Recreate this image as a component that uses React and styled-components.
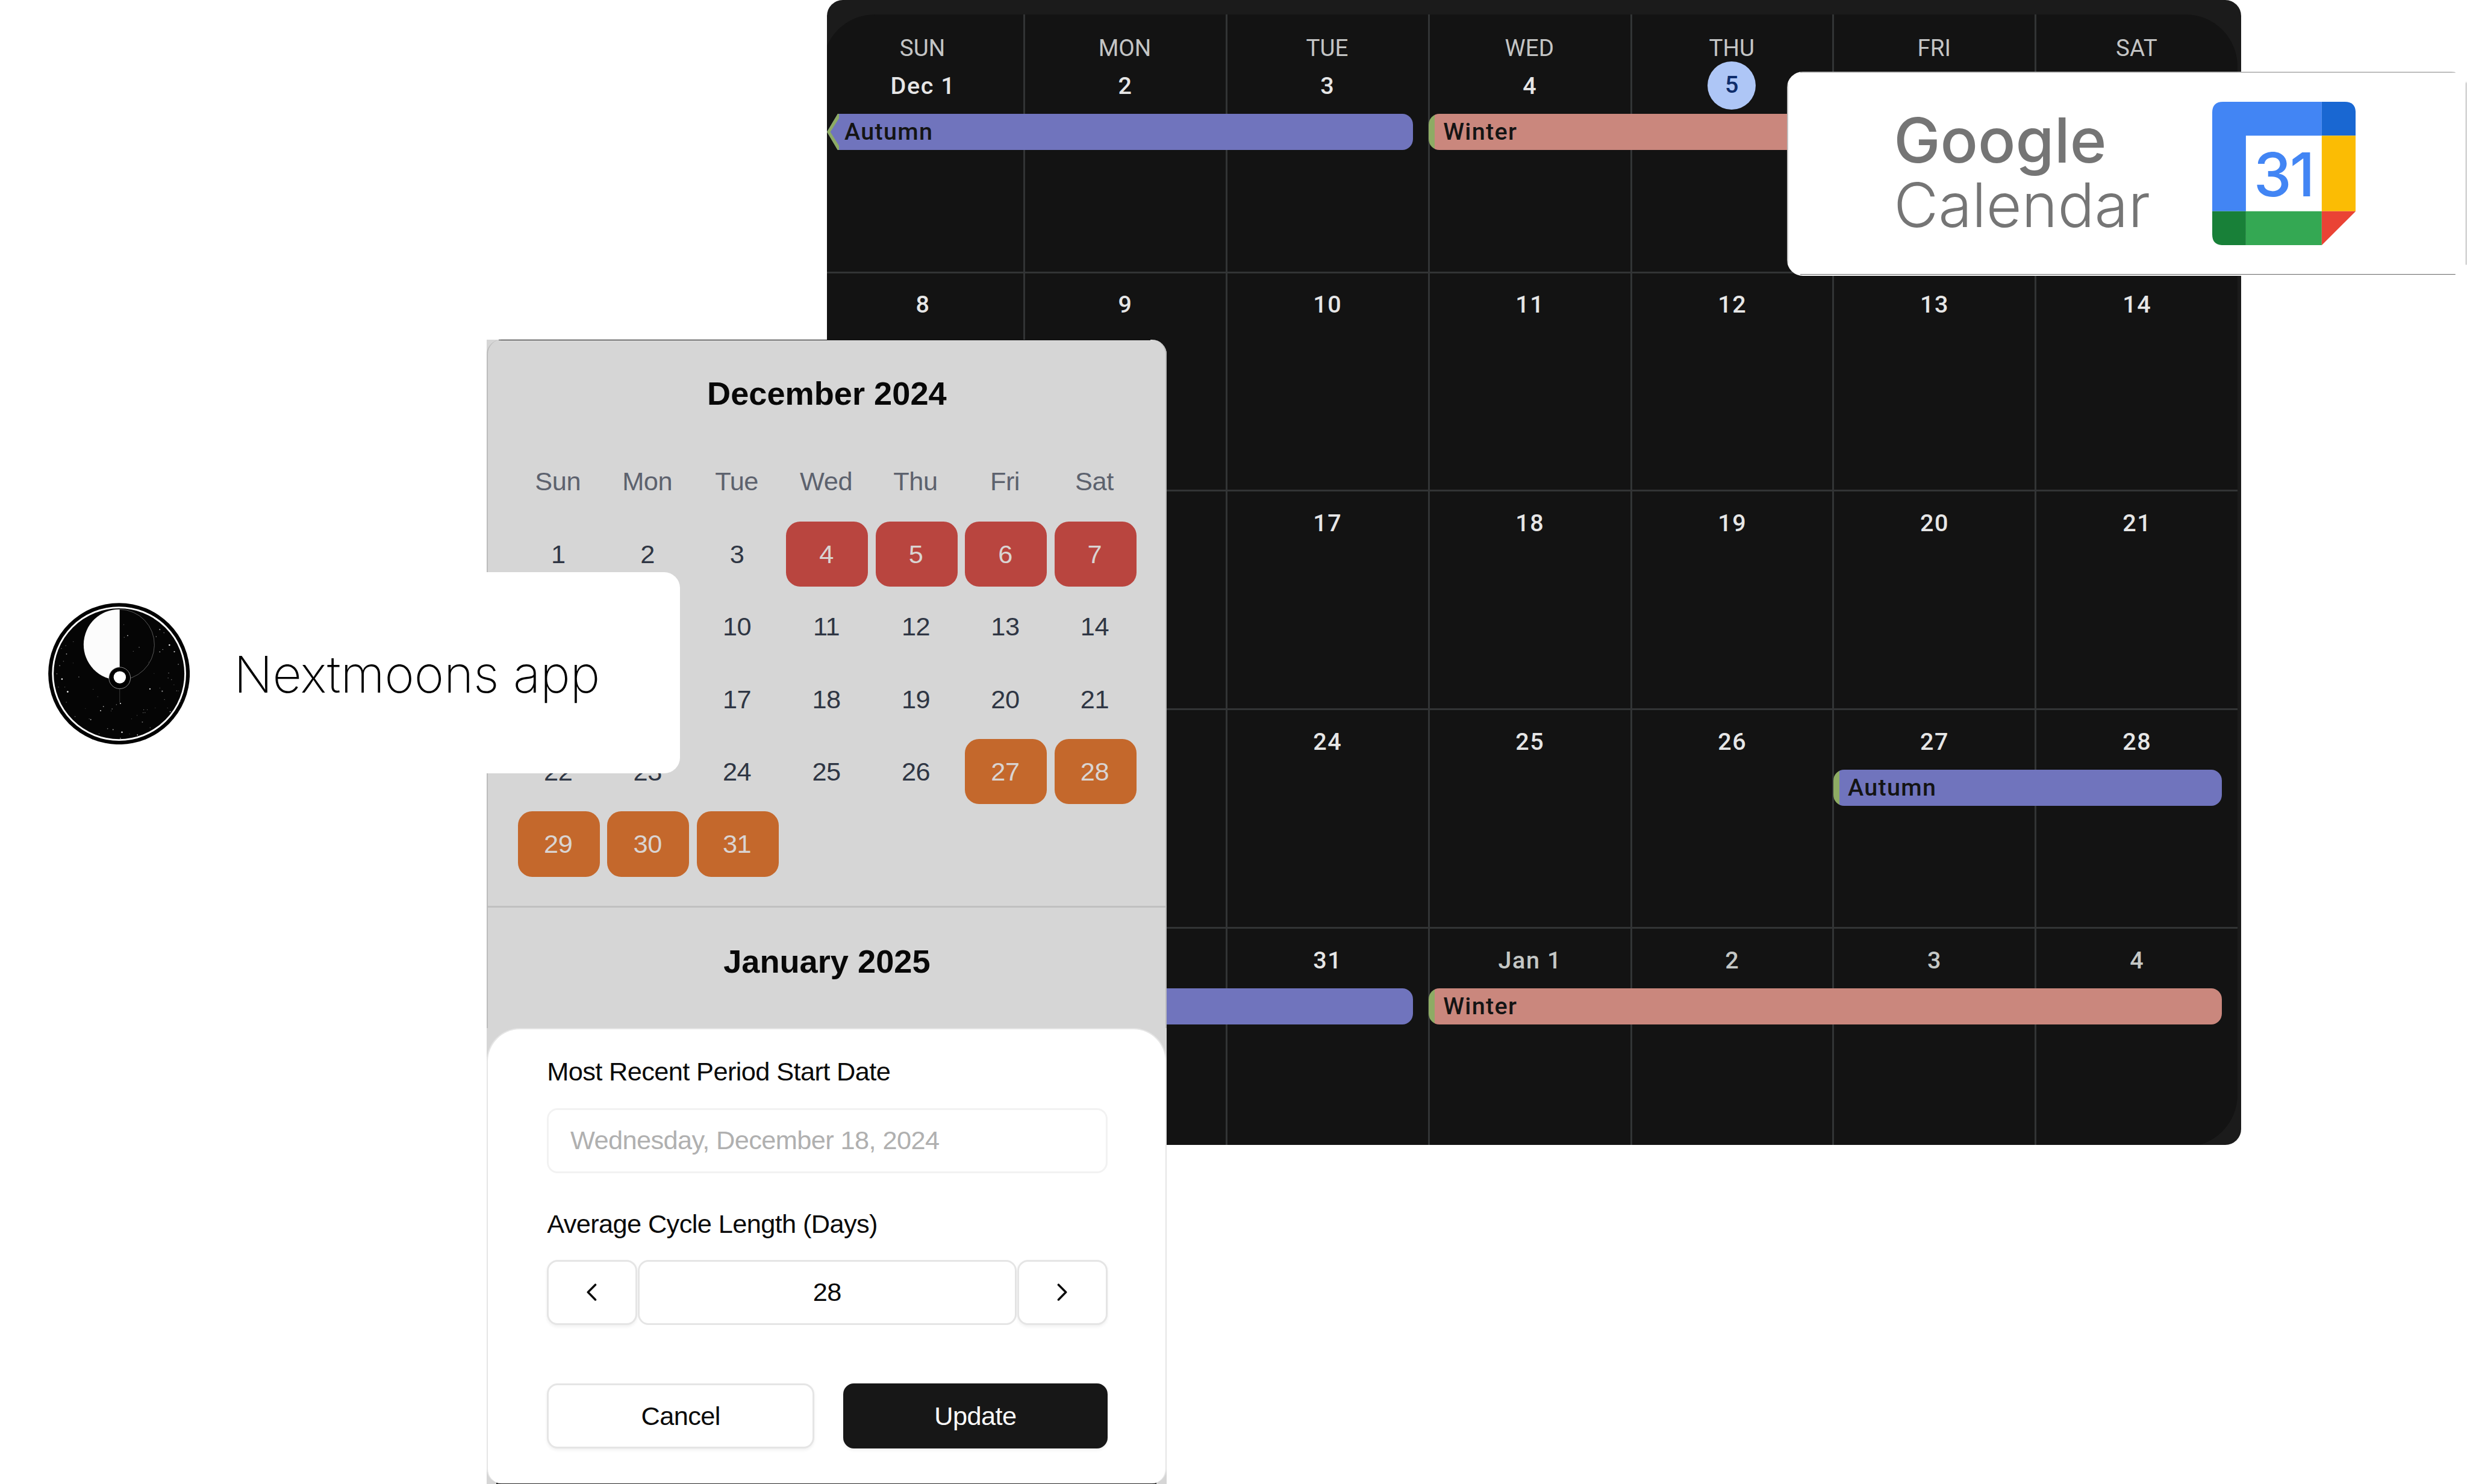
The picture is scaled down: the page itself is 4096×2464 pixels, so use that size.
import React from "react";
import styled, { createGlobalStyle, css } from "styled-components";

const GlobalStyle = createGlobalStyle`
  html { font-size: 9.40961px; }
  body { margin: 0; background: #fff; overflow: hidden; }
  *, *::before, *::after { box-sizing: border-box; }
`;

const sans = css`font-family: "Liberation Sans", Arial, sans-serif;`;
const ui = css`font-family: Roboto, sans-serif;`;
const brand = css`font-family: Inter, sans-serif;`;

const Stage = styled.main`
  position: relative;
  width: 100vw;
  height: 100vh;
  overflow: hidden;
  background: #fff;
`;

/* ---------- Month view ---------- */

const MonthWindow = styled.section`
  position: absolute;
  left: 145.9rem;
  top: 0;
  width: 249.5rem;
  height: 202rem;
  padding-top: 2.5rem;
  border-radius: 2.8rem;
  background: #1b1b1b;
  overflow: hidden;
  ${ui}
`;

const MonthGrid = styled.div`
  display: grid;
  grid-template-rows: 45.7rem repeat(3, 38.57rem) 38.7rem;
  width: 249.65rem;
  height: 199.9rem;
  margin-left: -0.75rem;
  border-radius: 9.2rem;
  background: #131313;
  overflow: hidden;
`;

const Week = styled.div`
  display: grid;
  grid-template-columns: repeat(6, 35.7rem) 35.45rem;
  grid-template-rows: 100%;
`;

const DayCell = styled.div`
  grid-row: 1;
  grid-column: ${(p) => p.$col};
  display: flex;
  flex-direction: column;
  align-items: center;
  padding: ${(p) => (p.$first ? "2.55rem" : "2.2rem")} 0.15rem 0 0;
  border-right: ${(p) => (p.$col < 7 ? "0.32rem solid #323435" : "none")};
  border-bottom: ${(p) => (p.$last ? "none" : "0.32rem solid #323435")};
`;

const WeekdayName = styled.div`
  height: 6.7rem;
  line-height: 6.7rem;
  font-size: 4.1rem;
  font-weight: 430;
  color: #c4c5c5;
`;

const DateLabel = styled.div`
  height: 6.7rem;
  line-height: 6.7rem;
  font-size: 4.2rem;
  font-weight: 460;
  letter-spacing: 0.17rem;
  margin-right: -0.2rem;
  color: ${(p) => (p.$muted ? "#c4c7c5" : "#e6e6e6")};
`;

const TodayLabel = styled.div`
  width: 8.5rem;
  height: 8.5rem;
  margin: -0.95rem 0;
  line-height: 8.3rem;
  text-align: center;
  border-radius: 50%;
  background: #aec6f6;
  color: #0f2d6b;
  font-size: 4.2rem;
  font-weight: 500;
`;

const tones = { autumn: "#7074bd", winter: "#ca877d" };

const Event = styled.div`
  grid-row: 1;
  grid-column: ${(p) => p.$from} / ${(p) => p.$to + 1};
  display: flex;
  height: 6.4rem;
  margin: ${(p) => (p.$first ? "17.6rem" : "10.45rem")} ${(p) => (p.$to === 7 ? "2.8rem" : "2.95rem")} 0
    ${(p) => (p.$continued ? "0.75rem" : "-0.15rem")};
`;

const EventBody = styled.div`
  flex: 1;
  display: flex;
  align-items: center;
  padding-left: ${(p) => (p.$continued ? "0.95rem" : "2.55rem")};
  border-radius: ${(p) => (p.$continued ? "0 1.9rem 1.9rem 0" : "1.9rem")};
  background: ${(p) =>
    p.$continued
      ? tones[p.$tone]
      : `linear-gradient(to right, #8dab64 1.1rem, ${tones[p.$tone]} 1.1rem)`};
  color: #141414;
  font-size: 4.2rem;
  font-weight: 460;
  letter-spacing: 0.14rem;
  line-height: 1;
`;

const ArrowHead = styled.svg`
  flex: none;
  display: block;
  width: 2.2rem;
  height: 6.4rem;
  margin-right: -0.06rem;
`;

const weekdays = ["SUN", "MON", "TUE", "WED", "THU", "FRI", "SAT"];

const weeks = [
  {
    days: ["Dec 1", "2", "3", "4", "5", "", ""],
    events: [
      { tone: "autumn", label: "Autumn", from: 1, to: 3, continued: true },
      { tone: "winter", label: "Winter", from: 4, to: 7 },
    ],
  },
  { days: ["8", "9", "10", "11", "12", "13", "14"], events: [] },
  { days: ["", "", "17", "18", "19", "20", "21"], events: [] },
  {
    days: ["", "", "24", "25", "26", "27", "28"],
    events: [{ tone: "autumn", label: "Autumn", from: 6, to: 7 }],
  },
  {
    days: ["", "", "31", "Jan 1", "2", "3", "4"],
    mutedFrom: 3,
    events: [
      { tone: "autumn", label: "", from: 1, to: 3, continued: true },
      { tone: "winter", label: "Winter", from: 4, to: 7 },
    ],
  },
];

function EventBar({ event, first }) {
  const { tone, label, from, to, continued } = event;
  return (
    <Event $from={from} $to={to} $first={first} $continued={continued}>
      {continued && (
        <ArrowHead viewBox="0 0 22 64" preserveAspectRatio="none">
          <path d="M19 0H22V64H19L0 32Z" fill={tones[tone]} />
          <path d="M19 0H22L23 5L6 32L23 59L22 64H19L0 32Z" fill="#8dab64" />
        </ArrowHead>
      )}
      <EventBody $tone={tone} $continued={continued}>{label}</EventBody>
    </Event>
  );
}

function MonthView() {
  return (
    <MonthWindow>
      <MonthGrid>
        {weeks.map((week, w) => (
          <Week key={w}>
            {week.days.map((day, d) => (
              <DayCell key={d} $col={d + 1} $first={w === 0} $last={w === 4}>
                {w === 0 && <WeekdayName>{weekdays[d]}</WeekdayName>}
                {w === 0 && d === 4 ? (
                  <TodayLabel>{day}</TodayLabel>
                ) : (
                  <DateLabel $muted={week.mutedFrom !== undefined && d >= week.mutedFrom}>{day}</DateLabel>
                )}
              </DayCell>
            ))}
            {week.events.map((event, i) => (
              <EventBar key={i} event={event} first={w === 0} />
            ))}
          </Week>
        ))}
      </MonthGrid>
    </MonthWindow>
  );
}

/* ---------- Phone ---------- */

const Phone = styled.section`
  position: absolute;
  left: 85.9rem;
  top: 59.9rem;
  width: 120rem;
  height: 202rem;
  display: flex;
  flex-direction: column;
  border-radius: 0 2.6rem 0 0;
  background:
    linear-gradient(#111, #111) 2.1rem 0 / 115rem 0.13rem no-repeat,
    linear-gradient(#111, #111) 1.7rem 100% / 116.5rem 0.2rem no-repeat,
    #d6d6d6;
  ${sans}
`;

const Months = styled.div`
  height: 121.5rem;
  border: 0 solid #bcbcbc;
  border-width: 0 0.22rem;
  border-radius: 2.6rem 2.6rem 0 0;
`;

const MonthTitle = styled.h2`
  margin: 0;
  height: 19.1rem;
  line-height: 19.1rem;
  text-align: center;
  font-size: 5.76rem;
  font-weight: 700;
  color: #080808;
`;

const DayGrid = styled.div`
  display: grid;
  grid-template-columns: repeat(7, 14.44rem);
  grid-auto-rows: 11.52rem;
  gap: 1.28rem 1.34rem;
  padding: 0 0 5.1rem 5.28rem;
  border-bottom: 0.32rem solid #c0c0c0;
`;

const WeekdayRow = styled.div`
  display: grid;
  grid-template-columns: repeat(7, 14.44rem);
  column-gap: 1.34rem;
  height: 13rem;
  padding-left: 5.1rem;
  line-height: 12.1rem;
  text-align: center;
  font-size: 4.61rem;
  letter-spacing: -0.05rem;
  color: #5d626e;
`;

const marks = { red: "#b9453f", orange: "#c4682c" };

const Day = styled.div`
  padding-right: 0.25rem;
  line-height: 11.6rem;
  text-align: center;
  font-size: 4.61rem;
  letter-spacing: -0.05rem;
  border-radius: 2.5rem;
  color: ${(p) => (p.$mark ? "#d9d4d2" : "#2f3644")};
  background: ${(p) => (p.$mark ? marks[p.$mark] : "transparent")};
`;

const Sheet = styled.div`
  height: 80.4rem;
  padding: 4.15rem 10.3rem 0 10.4rem;
  border: 0.22rem solid #e5e5e5;
  border-bottom: 0;
  border-radius: 5.9rem 5.9rem 2.6rem 2.6rem;
  background: #fff;
  font-size: 4.61rem;
  letter-spacing: -0.066rem;
  color: #0a0a0a;
`;

const Label = styled.div`
  height: 6.6rem;
  line-height: 6.6rem;
  white-space: nowrap;
`;

const box = css`
  display: flex;
  align-items: center;
  justify-content: center;
  height: 11.5rem;
  border: 0.32rem solid #e5e5e5;
  border-radius: 1.9rem;
  background: #fff;
`;

const DateField = styled.div`
  ${box}
  justify-content: flex-start;
  margin: 3.15rem 0 5.7rem;
  padding-left: 3.8rem;
  border-color: #f2f2f2;
  color: #b0b0b0;
`;

const Stepper = styled.div`
  display: grid;
  grid-template-columns: 15.9rem 1fr 15.9rem;
  column-gap: 0.1rem;
  margin: 3rem 0 10.3rem;
`;

const raised = css`box-shadow: 0 0.3rem 0.6rem rgba(0, 0, 0, 0.06);`;

const StepButton = styled.div`${box} ${raised}`;
const StepValue = styled.div`${box}`;

const Chevron = styled.svg`
  display: block;
  width: 1.8rem;
  height: 3.1rem;
  fill: none;
  stroke: #0a0a0a;
  stroke-width: 3.8;
  stroke-linecap: round;
  stroke-linejoin: round;
`;

const Actions = styled.div`
  display: grid;
  grid-template-columns: 47.2rem 1fr;
  column-gap: 5.1rem;
`;

const Button = styled.div`
  ${box}
  ${raised}
  ${(p) => p.$primary && css`background: #171717; border-color: #171717; color: #fafafa;`}
`;

const december = [
  "1", "2", "3", "4", "5", "6", "7",
  "", "", "10", "11", "12", "13", "14",
  "", "", "17", "18", "19", "20", "21",
  "22", "23", "24", "25", "26", "27", "28",
  "29", "30", "31",
];

const markOf = (day) => {
  const n = Number(day);
  if (n >= 4 && n <= 7) return "red";
  if (n >= 27) return "orange";
  return undefined;
};

function PhoneView() {
  return (
    <Phone>
      <Months>
        <MonthTitle>December 2024</MonthTitle>
        <WeekdayRow>
          {["Sun", "Mon", "Tue", "Wed", "Thu", "Fri", "Sat"].map((d) => (
            <span key={d}>{d}</span>
          ))}
        </WeekdayRow>
        <DayGrid>
          {december.map((d, i) => (
            <Day key={i} $mark={markOf(d)}>{d}</Day>
          ))}
        </DayGrid>
        <MonthTitle>January 2025</MonthTitle>
      </Months>
      <Sheet>
        <Label>Most Recent Period Start Date</Label>
        <DateField>Wednesday, December 18, 2024</DateField>
        <Label>Average Cycle Length (Days)</Label>
        <Stepper>
          <StepButton>
            <Chevron viewBox="0 0 18 31"><path d="M15.4 2.4L2.4 15.5L15.4 28.6" /></Chevron>
          </StepButton>
          <StepValue>28</StepValue>
          <StepButton>
            <Chevron viewBox="0 0 18 31"><path d="M2.6 2.4L15.6 15.5L2.6 28.6" /></Chevron>
          </StepButton>
        </Stepper>
        <Actions>
          <Button>Cancel</Button>
          <Button $primary>Update</Button>
        </Actions>
      </Sheet>
    </Phone>
  );
}

/* ---------- Brand cards ---------- */

const GoogleCard = styled.section`
  position: absolute;
  left: 315.3rem;
  top: 12.6rem;
  width: 120rem;
  height: 36.1rem;
  display: flex;
  align-items: flex-start;
  border-radius: 2.8rem;
  background:
    linear-gradient(#b8b8b8, #b8b8b8) 2.4rem 0 / 115.6rem 0.2rem no-repeat,
    linear-gradient(#666, #666) 2.4rem 35.78rem / 115.6rem 0.11rem no-repeat,
    linear-gradient(#bdbdbd, #bdbdbd) 0 2.2rem / 0.2rem 31.8rem no-repeat,
    linear-gradient(#9a9a9a, #9a9a9a) 119.75rem 1.8rem / 0.11rem 32.4rem no-repeat,
    #fff;
  ${brand}
`;

const GoogleName = styled.div`
  flex: none;
  width: 56.2rem;
  margin-left: 18.85rem;
  padding-top: 6.4rem;
  color: #757575;
`;

const NameLine = styled.div`
  height: 11.5rem;
  line-height: 11.5rem;
  white-space: nowrap;
  font-size: ${(p) => (p.$light ? "10.8rem" : "11rem")};
  font-weight: ${(p) => (p.$light ? 300 : 550)};
`;

const GoogleIcon = styled.svg`
  flex: none;
  display: block;
  width: 25.3rem;
  height: 25.3rem;
  margin-top: 5.4rem;
`;

const IconText = styled.text`
  ${brand}
  font-size: 320px;
  font-weight: 540;
  letter-spacing: -10px;
  fill: #4285f4;
`;

function GoogleCalendarCard() {
  return (
    <GoogleCard>
      <GoogleName>
        <NameLine>Google</NameLine>
        <NameLine $light>Calendar</NameLine>
      </GoogleName>
      <GoogleIcon viewBox="0 0 758 758">
        <path d="M57 0H579V179H178V579H0V57Q0 0 57 0Z" fill="#4285f4" />
        <path d="M579 0H701Q758 0 758 57V179H579Z" fill="#1967d2" />
        <path d="M579 179H758V579H579Z" fill="#fbbc04" />
        <path d="M178 579H579V758H178Z" fill="#34a853" />
        <path d="M0 579H178V758H57Q0 758 0 701Z" fill="#188038" />
        <path d="M579 579H758L579 758Z" fill="#ea4335" />
        <IconText x="219" y="501">31</IconText>
      </GoogleIcon>
    </GoogleCard>
  );
}

const AppCard = styled.section`
  position: absolute;
  left: 0;
  top: 101rem;
  width: 120rem;
  height: 35.5rem;
  display: flex;
  align-items: center;
  padding-left: 8.5rem;
  border-radius: 2.8rem;
  background: #fff;
`;

const AppLogo = styled.svg`
  display: block;
  flex: none;
  width: 25rem;
  height: 25rem;
  margin-top: 0.3rem;
`;

const AppName = styled.div`
  ${brand}
  margin: 0.4rem 0 0 7.75rem;
  white-space: nowrap;
  font-size: 8.95rem;
  font-weight: 220;
  letter-spacing: -0.02rem;
  line-height: 1;
  color: #000;
`;

/* x, y, radius, brightness */
const stars = [
  [671, 250, 4, 1], [620, 168, 3, 0.7], [642, 185, 2.4, 0.5], [601, 205, 2.4, 0.6], [697, 285, 3.6, 0.75],
  [636, 274, 2.4, 0.6], [620, 286, 3, 0.6], [718, 352, 2.6, 0.6], [667, 398, 2.6, 0.5], [682, 433, 2.2, 0.5],
  [664, 424, 2.4, 0.4], [568, 482, 3.6, 0.9], [633, 494, 3.4, 0.6], [620, 477, 2, 0.4], [103, 430, 4, 1],
  [133, 497, 4.4, 0.95], [192, 419, 2.6, 0.5], [91, 359, 2.6, 0.7], [111, 336, 2.6, 0.4], [127, 297, 2.8, 0.7],
  [100, 268, 2, 0.5], [123, 253, 2.6, 0.35], [76, 402, 2.2, 0.6], [84, 472, 2, 0.5], [118, 472, 2, 0.4],
  [126, 552, 2.4, 0.4], [163, 232, 2, 0.4], [450, 200, 3, 0.75], [432, 209, 2, 0.5], [511, 262, 2.4, 0.55],
  [480, 283, 2, 0.4], [430, 142, 2, 0.4], [412, 559, 3.2, 0.9], [391, 565, 2.4, 0.5], [368, 588, 2.6, 0.5],
  [322, 575, 2.8, 0.7], [307, 597, 3.2, 0.8], [292, 523, 2, 0.4], [268, 484, 2, 0.4], [363, 598, 2, 0.4],
  [255, 644, 3, 0.7], [247, 640, 2, 0.5], [172, 628, 2.2, 0.5], [344, 692, 2.6, 0.5], [373, 697, 2.8, 0.7],
  [420, 711, 4, 0.9], [299, 719, 2.4, 0.4], [502, 725, 3, 0.7], [412, 743, 2.6, 0.7], [528, 657, 3, 0.5],
  [569, 687, 2.6, 0.4], [535, 592, 2, 0.5], [542, 607, 2, 0.5], [532, 608, 2, 0.5], [554, 592, 2, 0.4],
  [500, 622, 2, 0.4], [675, 602, 3, 0.7], [645, 538, 2.4, 0.4], [661, 583, 2, 0.4], [596, 582, 2, 0.3],
  [709, 492, 2.2, 0.5], [718, 492, 2, 0.4], [471, 640, 2, 0.3], [730, 548, 2, 0.4], [695, 460, 2, 0.3],
  [227, 585, 1.8, 0.3], [162, 345, 1.8, 0.3], [560, 340, 1.8, 0.25], [590, 400, 1.8, 0.25], [460, 720, 1.8, 0.3],
];

function AppBrandCard() {
  return (
    <AppCard>
      <AppLogo viewBox="30 27 749 749">
        <circle cx="404.5" cy="401.5" r="374" fill="#000" />
        <circle cx="404.5" cy="401.5" r="350" fill="#050505" stroke="#fff" strokeWidth="9" />
        {stars.map(([x, y, r, o]) => (
          <circle key={`${x}-${y}`} cx={x} cy={y} r={r} fill="#fff" opacity={o} />
        ))}
        <path d="M408 61A187 187 0 0 0 401 435H408Z" fill="#fcfcfc" />
        <path d="M408 61A187 187 0 0 1 401 435" fill="none" stroke="#8a8a8a" strokeWidth="2" />
        <path d="M408 480V554" stroke="#4a4a4a" strokeWidth="2.4" />
        <circle cx="408" cy="424" r="57" fill="#000" stroke="#b5b5b5" strokeWidth="2.4" />
        <circle cx="408.5" cy="420.5" r="32.5" fill="#fff" />
      </AppLogo>
      <AppName>Nextmoons app</AppName>
    </AppCard>
  );
}

export default function App() {
  return (
    <Stage>
      <GlobalStyle />
      <MonthView />
      <PhoneView />
      <GoogleCalendarCard />
      <AppBrandCard />
    </Stage>
  );
}
